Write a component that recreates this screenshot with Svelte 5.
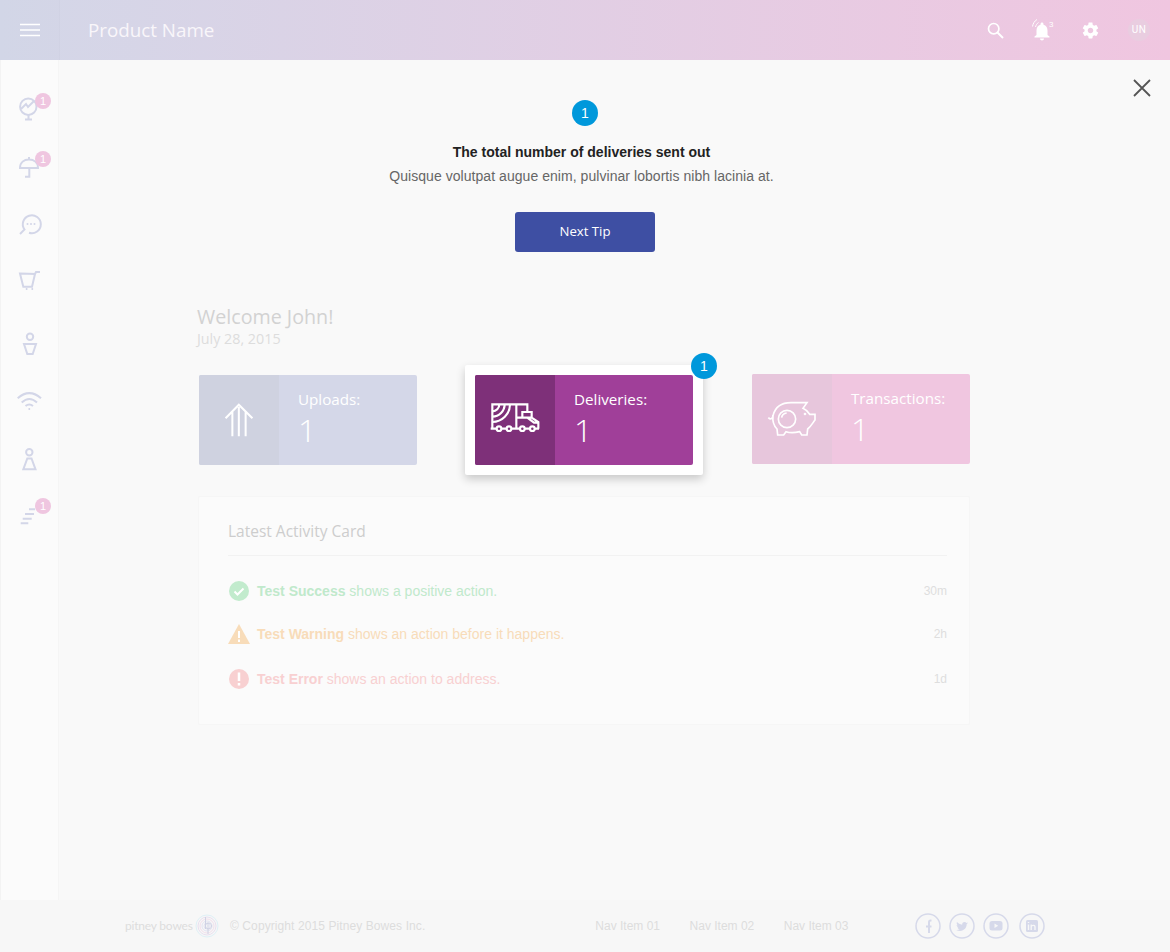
<script>
  const navBadges = [true, true, false, false, false, false, false, true];
  const activities = [
    { kind: 'success', strong: 'Test Success', rest: ' shows a positive action.', time: '30m' },
    { kind: 'warning', strong: 'Test Warning', rest: ' shows an action before it happens.', time: '2h' },
    { kind: 'error', strong: 'Test Error', rest: ' shows an action to address.', time: '1d' }
  ];
  const navLinks = ['Nav Item 01', 'Nav Item 02', 'Nav Item 03'];
</script>

<div class="page">
  <header class="topbar">
    <button class="menu" aria-label="Menu">
      <svg width="20" height="14" viewBox="0 0 20 14"><path d="M0 1.5H20M0 7H20M0 12.5H20" stroke="#fff" stroke-width="1.5" fill="none" /></svg>
    </button>
    <div class="product">Product Name</div>
    <div class="actions">
      <svg class="search" width="17" height="17" viewBox="0 0 17 17" fill="none" stroke="#fff"><circle cx="6.7" cy="6.700" r="5.200" stroke-width="1.700" /><path d="M10.500 10.500L16 16" stroke-width="2" /></svg>
      <div class="bell">
        <svg width="24" height="24" viewBox="0 0 24 24"><path fill="#fff" d="M12 21.5c1.1 0 2-.9 2-2h-4c0 1.100.89 2 2 2zm5.500-5.500v-4.500c0-2.800-1.400-5.100-4-5.800V5c0-.83-.67-1.500-1.500-1.500s-1.500.67-1.500 1.500v.7C7.900 6.400 6.500 8.700 6.500 11.500V16l-2 1.500v1h15v-1l-2-1.500z" transform="translate(0 1)" /><path d="M2.500 8.500C3 5.500 4.500 3 7 1.500M5.500 9C6 7 7 5.500 8.500 4.500" stroke="#fff" stroke-width="1" fill="none" /></svg>
        <span>3</span>
      </div>
      <svg class="gear" width="19" height="19" viewBox="0 0 24 24"><path fill="#fff" d="M19.430 12.980c.04-.32.07-.64.07-.98s-.03-.66-.07-.98l2.110-1.650c.19-.15.24-.42.12-.64l-2-3.460c-.12-.22-.39-.3-.61-.22l-2.490 1c-.52-.4-1.080-.73-1.690-.98l-.38-2.650C14.460 2.180 14.250 2 14 2h-4c-.25 0-.46.18-.49.42l-.38 2.650c-.61.25-1.170.59-1.690.98l-2.490-1c-.23-.09-.49 0-.61.22l-2 3.460c-.13.22-.07.49.12.64l2.110 1.650c-.04.32-.07.65-.07.98s.03.66.07.98l-2.110 1.650c-.19.15-.24.42-.12.64l2 3.460c.12.22.39.3.61.22l2.490-1c.52.4 1.080.73 1.690.98l.38 2.650c.03.24.24.42.49.42h4c.25 0 .46-.18.49-.42l.38-2.650c.61-.25 1.170-.59 1.690-.98l2.490 1c.23.09.49 0 .61-.22l2-3.460c.12-.22.07-.49-.12-.64l-2.110-1.650zM12 15.500c-1.930 0-3.500-1.570-3.500-3.500s1.570-3.500 3.500-3.500 3.500 1.570 3.500 3.500-1.570 3.500-3.500 3.500z" /></svg>
      <div class="avatar">UN</div>
    </div>
  </header>

  <div class="middle">
    <nav class="sidebar">
      {#each navBadges as badge, i}
        <div class="nav-item">
          <svg width="30" height="30" viewBox="0 0 30 30" fill="none" stroke="#d3d6e8" stroke-width="2">
            {#if i === 0}
              <circle cx="14.300" cy="13.700" r="8.200" /><path d="M14.500 22V26M11 26.500H18M7 16L12 11L14 14L20 8" />
            {:else if i === 1}
              <path d="M6 17C6 11.500 10 8.500 15 8.500C20 8.500 24 11.500 24 17H6ZM15 6V8.500M15.300 17V25.700H11" />
            {:else if i === 2}
              <path d="M6 25L10.500 20.500A9 9 0 1 1 15 23.800" /><circle cx="13.500" cy="15" r="1" fill="#d3d6e8" stroke="none" /><circle cx="17" cy="15" r="1" fill="#d3d6e8" stroke="none" /><circle cx="20.500" cy="15" r="1" fill="#d3d6e8" stroke="none" />
            {:else if i === 3}
              <path d="M6 7.500L21 8L18 20.700H9.300ZM21 8L22 6H26M11.800 23H13.400M17.500 23H19.100" />
            {:else if i === 4}
              <circle cx="16" cy="7.700" r="3.200" /><path d="M10 15H22L18.700 25H13.300Z" />
            {:else if i === 5}
              <path d="M3.700 13.300Q15.300 3 27 13.300M7.700 17.500Q15.300 10.500 23 17.500M11.500 21Q15.300 18 19 21M14.500 24H16.100" />
            {:else if i === 6}
              <circle cx="15.300" cy="8.300" r="3.200" /><path d="M9.300 25.300L13.300 14.500H17.500L21.500 25.300Z" />
            {:else}
              <path d="M15 9.300H21M11 14H20M8.700 18.700H17.700M6.700 23.300H14.300" />
            {/if}
          </svg>
          {#if badge}<span class="nav-badge">1</span>{/if}
        </div>
      {/each}
    </nav>

    <main class="main">
      <button class="close" aria-label="Close">
        <svg width="18" height="18" viewBox="0 0 18 18"><path d="M1 1L17 17M17 1L1 17" stroke="#555" stroke-width="1.800" fill="none" /></svg>
      </button>

      <section class="tip">
        <div class="step">1</div>
        <h2>The total number of deliveries sent out</h2>
        <p>Quisque volutpat augue enim, pulvinar lobortis nibh lacinia at.</p>
        <button class="next">Next Tip</button>
      </section>

      <section class="dash">
        <div class="welcome">Welcome John!</div>
        <div class="date">July 28, 2015</div>

        <div class="cards">
          <div class="stat uploads">
            <div class="stat-icon">
              <svg width="30" height="34" viewBox="105 160 85 100" fill="none" stroke="#fff" stroke-width="6"><path d="M108 205L147 165L187 205M128 186V258M147 172V258M167 186V258" /></svg>
            </div>
            <div class="stat-text"><div class="label">Uploads:</div><div class="value">1</div></div>
          </div>

          <div class="focus">
            <div class="stat deliveries">
              <div class="stat-icon">
                <svg width="52" height="37" viewBox="90 178 156 111" fill="none" stroke="#fff" stroke-width="6.500">
                  <path d="M100 258V185H205V208M172 185V258M95 258H112M128 258H142M158 258H182M198 258H212M228 258H240" />
                  <path d="M100 238A53 53 0 0 0 153 185M100 222A37 37 0 0 0 137 185M100 206A21 21 0 0 0 121 185" />
                  <path d="M172 225H190L190 208H218V225L238 238V258M190 225H218M205 225L225 240H238" />
                  <circle cx="120" cy="258" r="7" /><circle cx="150" cy="258" r="7" /><circle cx="190" cy="258" r="7" /><circle cx="220" cy="258" r="7" />
                </svg>
              </div>
              <div class="stat-text"><div class="label">Deliveries:</div><div class="value">1</div></div>
            </div>
            <div class="focus-step">1</div>
          </div>

          <div class="stat transactions">
            <div class="stat-icon">
              <svg width="50" height="38" viewBox="68 105 150 114" fill="none" stroke="#fff" stroke-width="5">
                <path d="M72 158C80 166 84 160 86 152C92 128 110 113 140 113H188L176 130C186 134 192 142 196 148H212V165C206 172 202 182 190 192L188 210H172L166 200C150 204 136 204 125 200L118 210H100L98 192C88 182 84 170 86 152" />
                <circle cx="128" cy="162" r="26" /><path d="M112 158C113 150 119 145 127 144" /><circle cx="182" cy="147" r="1.500" />
              </svg>
            </div>
            <div class="stat-text"><div class="label">Transactions:</div><div class="value">1</div></div>
          </div>
        </div>

        <div class="activity">
          <h3>Latest Activity Card</h3>
          <ul>
            {#each activities as a}
              <li class={a.kind}>
                {#if a.kind === 'success'}
                  <svg width="22" height="22" viewBox="0 0 22 22"><circle cx="11" cy="11" r="10" fill="#c2ebcd" /><path d="M6.500 11.500L9.500 14.500L15.500 8.500" stroke="#fff" stroke-width="2" fill="none" /></svg>
                {:else if a.kind === 'warning'}
                  <svg width="22" height="22" viewBox="0 0 22 22"><path d="M11 1L22 21H0Z" fill="#f8dcb9" /><path d="M11 8V15M11 16.500V19" stroke="#fff" stroke-width="2" /></svg>
                {:else}
                  <svg width="22" height="22" viewBox="0 0 22 22"><circle cx="11" cy="11" r="10" fill="#f8d0d1" /><path d="M11 4.500V13M11 15V17.500" stroke="#fff" stroke-width="2.500" /></svg>
                {/if}
                <span class="msg"><strong>{a.strong}</strong>{a.rest}</span>
                <span class="time">{a.time}</span>
              </li>
            {/each}
          </ul>
        </div>
      </section>
    </main>
  </div>

  <footer class="footer">
    <div class="brand">pitney bowes</div>
    <svg class="logo" width="24" height="24" viewBox="0 0 24 24" fill="none">
      <circle cx="12" cy="12" r="11" stroke="#dff0f6" /><circle cx="12" cy="12" r="9" stroke="#e8e0f0" /><circle cx="12" cy="12" r="7" stroke="#f2e0ec" /><circle cx="12" cy="12" r="5" stroke="#e4e4f2" /><circle cx="12" cy="12" r="3" stroke="#e4e4f2" />
      <path d="M10.500 3V15M10.500 12A3 3 0 1 0 10.500 11.900M13 20V9" stroke="#cfd2e4" stroke-width="1" />
    </svg>
    <div class="copy">© Copyright 2015 Pitney Bowes Inc.</div>
    <div class="links">
      {#each navLinks as l}<span>{l}</span>{/each}
    </div>
    <div class="social">
      <svg width="26" height="26" viewBox="0 0 26 26" fill="none"><circle cx="13" cy="13" r="12" stroke="#d6d9ea" stroke-width="1.500" /><path d="M14 20V13.500H16.500M11 13.500H14M16.500 7.500H15.500C14.500 7.500 14 8.200 14 9.200V13.500" stroke="#d6d9ea" stroke-width="2" /></svg>
      <svg width="26" height="26" viewBox="0 0 26 26" fill="none"><circle cx="13" cy="13" r="12" stroke="#d6d9ea" stroke-width="1.500" /><path d="M19 9.500C18.500 9.800 18 9.900 17.500 10C17 9.300 16.300 9 15.500 9C14 9 12.900 10.300 13.200 11.700C11 11.600 9.300 10.600 8 9.100C7.400 10.200 7.700 11.500 8.700 12.200C8.300 12.200 7.900 12.100 7.600 11.900C7.600 13.100 8.400 14.100 9.600 14.300C9.200 14.400 8.800 14.400 8.500 14.400C8.800 15.300 9.700 16 10.800 16C9.800 16.800 8.600 17.100 7.300 17C8.400 17.700 9.700 18 11 18C15.300 18 17.800 14.400 17.700 11.100C18.200 10.700 18.700 10.200 19 9.500Z" fill="#d6d9ea" /></svg>
      <svg width="26" height="26" viewBox="0 0 26 26" fill="none"><circle cx="13" cy="13" r="12" stroke="#d6d9ea" stroke-width="1.500" /><rect x="6.500" y="8" width="13" height="9.500" rx="2.500" fill="#d6d9ea" /><path d="M11.500 10.500V15L15.200 12.700Z" fill="#f7f7f7" /></svg>
      <svg width="26" height="26" viewBox="0 0 26 26" fill="none"><circle cx="13" cy="13" r="12" stroke="#d6d9ea" stroke-width="1.500" /><rect x="7" y="7" width="12" height="12" rx="1.500" fill="#d6d9ea" /><path d="M9.500 11.500V17M9.500 9V10M12.200 17V11.500M12.200 14C12.200 12.500 16 11.200 16 14V17" stroke="#f7f7f7" stroke-width="1.400" /></svg>
    </div>
  </footer>
</div>

<style>
  :global(body) {
    margin: 0;
    background: #f9f9f9;
    font-family: "Liberation Sans", Arial, sans-serif;
  }
  .page {
    width: 1170px;
    height: 952px;
    display: flex;
    flex-direction: column;
    overflow: hidden;
  }

  .topbar {
    height: 60px;
    flex: none;
    display: flex;
    align-items: center;
    background: linear-gradient(90deg, #d3d7e8 0%, #f0c6e0 100%);
  }
  .menu {
    width: 60px;
    height: 60px;
    padding: 0;
    border: 0;
    border-right: 1px solid rgba(0, 0, 0, 0.01);
    background: rgba(0, 0, 0, 0.005);
    display: flex;
    align-items: center;
    justify-content: center;
  }
  .product {
    margin-left: 28px;
    color: #f9f6fa;
    font: 400 18.800px/1 "Open Sans", sans-serif;
  }
  .actions {
    margin-left: auto;
    padding-right: 20px;
    display: flex;
    align-items: center;
  }
  .search { margin-right: 26px; }
  .bell {
    position: relative;
    width: 24px;
    height: 24px;
    margin-right: 27px;
  }
  .bell span {
    position: absolute;
    left: 19px;
    top: 2px;
    font-size: 8px;
    color: #fff;
  }
  .gear { margin-right: 28px; }
  .avatar {
    width: 22px;
    height: 22px;
    border-radius: 50%;
    background: #e9cde0;
    color: #fff;
    font: 400 10px/22px Roboto, sans-serif;
    text-align: center;
    letter-spacing: 0.4px;
  }

  .middle {
    flex: 1;
    min-height: 0;
    display: flex;
  }
  .sidebar {
    width: 59px;
    flex: none;
    box-sizing: border-box;
    padding-top: 33px;
    background: #fbfbfb;
    border-left: 1px solid #f3f3f3;
    border-right: 1px solid #f5f5f5;
    box-shadow: 1px 0 2px rgba(0, 0, 0, 0.01);
  }
  .nav-item {
    position: relative;
    width: 30px;
    height: 30px;
    margin-left: 13px;
    margin-bottom: 28px;
  }
  .nav-item:nth-child(3) { margin-bottom: 27px; }
  .nav-item:nth-child(4) { margin-bottom: 33px; }
  .nav-item:nth-child(5) { margin-bottom: 26px; }
  .nav-item:nth-child(6) { margin-bottom: 29px; }
  .nav-item:nth-child(7) { margin-bottom: 26px; }
  .nav-item svg { display: block; }
  .nav-badge {
    position: absolute;
    left: 21px;
    top: 0;
    width: 16px;
    height: 16px;
    border-radius: 50%;
    background: #efc6e0;
    color: #fff;
    font-size: 11px;
    line-height: 16px;
    text-align: center;
  }
  .nav-item:nth-child(8) .nav-badge { top: -2px; }

  .main {
    position: relative;
    flex: 1;
    min-width: 0;
    background: #f9f9f9;
  }
  .close {
    position: absolute;
    right: 19px;
    top: 19px;
    width: 18px;
    height: 18px;
    padding: 0;
    border: 0;
    background: none;
  }
  .close svg { display: block; }

  .tip {
    width: 1052px;
    padding-top: 40px;
    display: flex;
    flex-direction: column;
    align-items: center;
    box-sizing: border-box;
  }
  .step, .focus-step {
    width: 26px;
    height: 26px;
    border-radius: 50%;
    background: #0098db;
    color: #fff;
    font-size: 14px;
    line-height: 26px;
    text-align: center;
  }
  .tip h2 {
    margin: 18px 7px 0 0;
    font-size: 14px;
    line-height: 16px;
    font-weight: 700;
    color: #222;
  }
  .tip p {
    margin: 8px 7px 0 0;
    font-size: 14px;
    line-height: 16px;
    color: #666;
    letter-spacing: 0.05px;
  }
  .next {
    margin-top: 28px;
    width: 140px;
    height: 40px;
    border: 0;
    border-radius: 3px;
    background: #3e4fa3;
    color: #fff;
    font: 400 13.200px/1 "Open Sans", sans-serif;
  }

  .dash {
    margin-left: 139px;
    width: 773px;
    padding-top: 53px;
  }
  .welcome {
    margin-left: -1px;
    font: 400 19.700px/24px "Open Sans", sans-serif;
    color: #d2d2d2;
  }
  .date {
    margin-left: -1px;
    margin-top: 1px;
    font: 400 14.300px/18px "Open Sans", sans-serif;
    color: #dddddd;
  }
  .cards {
    display: flex;
    align-items: flex-start;
    margin-top: 17px;
    margin-left: 1px;
  }
  .stat {
    width: 218px;
    height: 90px;
    display: flex;
    border-radius: 2px;
    overflow: hidden;
    color: #fff;
    flex: none;
  }
  .stat-icon {
    width: 80px;
    flex: none;
    display: flex;
    align-items: center;
    justify-content: center;
  }
  .stat-text {
    padding-left: 19px;
    padding-top: 14px;
  }
  .label { font: 400 15.200px/20px "Open Sans", sans-serif; }
  .value { font: 300 32px/40px "Open Sans", sans-serif; margin-top: 1px; }
  .uploads { background: #d4d7e8; margin-top: 10px; }
  .uploads .stat-icon { background: #cfd2e0; }
  .deliveries { background: #a03f99; }
  .deliveries .stat-icon { background: #7e3079; }
  .transactions { background: #f0c6e0; margin-top: 9px; margin-left: 49px; }
  .transactions .stat-icon { background: #e7c6dc; }
  .focus {
    position: relative;
    margin-left: 48px;
    padding: 10px;
    background: #fff;
    border-radius: 2px;
    box-shadow: 0 4px 10px rgba(0, 0, 0, 0.2);
    flex: none;
  }
  .focus-step {
    position: absolute;
    right: -14px;
    top: -12px;
  }

  .activity {
    margin-top: 21px;
    width: 772px;
    height: 229px;
    box-sizing: border-box;
    padding: 0 22px 0 29px;
    background: #fbfbfb;
    border: 1px solid #f6f6f6;
    border-radius: 2px;
  }
  .activity h3 {
    margin: 0;
    height: 59px;
    box-sizing: border-box;
    padding-top: 24px;
    font: 400 15.500px/20px "Open Sans", sans-serif;
    color: #cdcdcd;
    border-bottom: 1px solid #f2f2f2;
  }
  .activity ul {
    list-style: none;
    margin: 13px 0 0;
    padding: 0;
  }
  .activity li {
    height: 44px;
    display: flex;
    align-items: center;
    font-size: 14px;
  }
  .activity li:nth-child(2) { height: 42px; }
  .activity li:nth-child(3) { height: 48px; }
  .msg { margin-left: 7px; }
  .msg strong { font-weight: 700; }
  .success { color: #c0e9cb; }
  .warning { color: #f8dcb9; }
  .error { color: #f8d0d1; }
  .time {
    margin-left: auto;
    font-size: 12px;
    color: #dedede;
  }

  .footer {
    height: 52px;
    flex: none;
    background: #f7f7f7;
    display: flex;
    align-items: center;
    color: #dddddd;
    font-size: 12px;
  }
  .brand {
    margin-left: 125px;
    width: 70px;
    font: 400 12px/1 Lato, sans-serif;
    letter-spacing: -0.2px;
    white-space: nowrap;
  }
  .copy { margin-left: 11px; letter-spacing: 0.09px; }
  .links {
    margin-left: 170px;
    display: flex;
    gap: 29.500px;
  }
  .social {
    margin-left: 67px;
    display: flex;
    gap: 8px;
  }
  .social svg { display: block; }
  .social svg:last-child { margin-left: 2px; }
</style>
